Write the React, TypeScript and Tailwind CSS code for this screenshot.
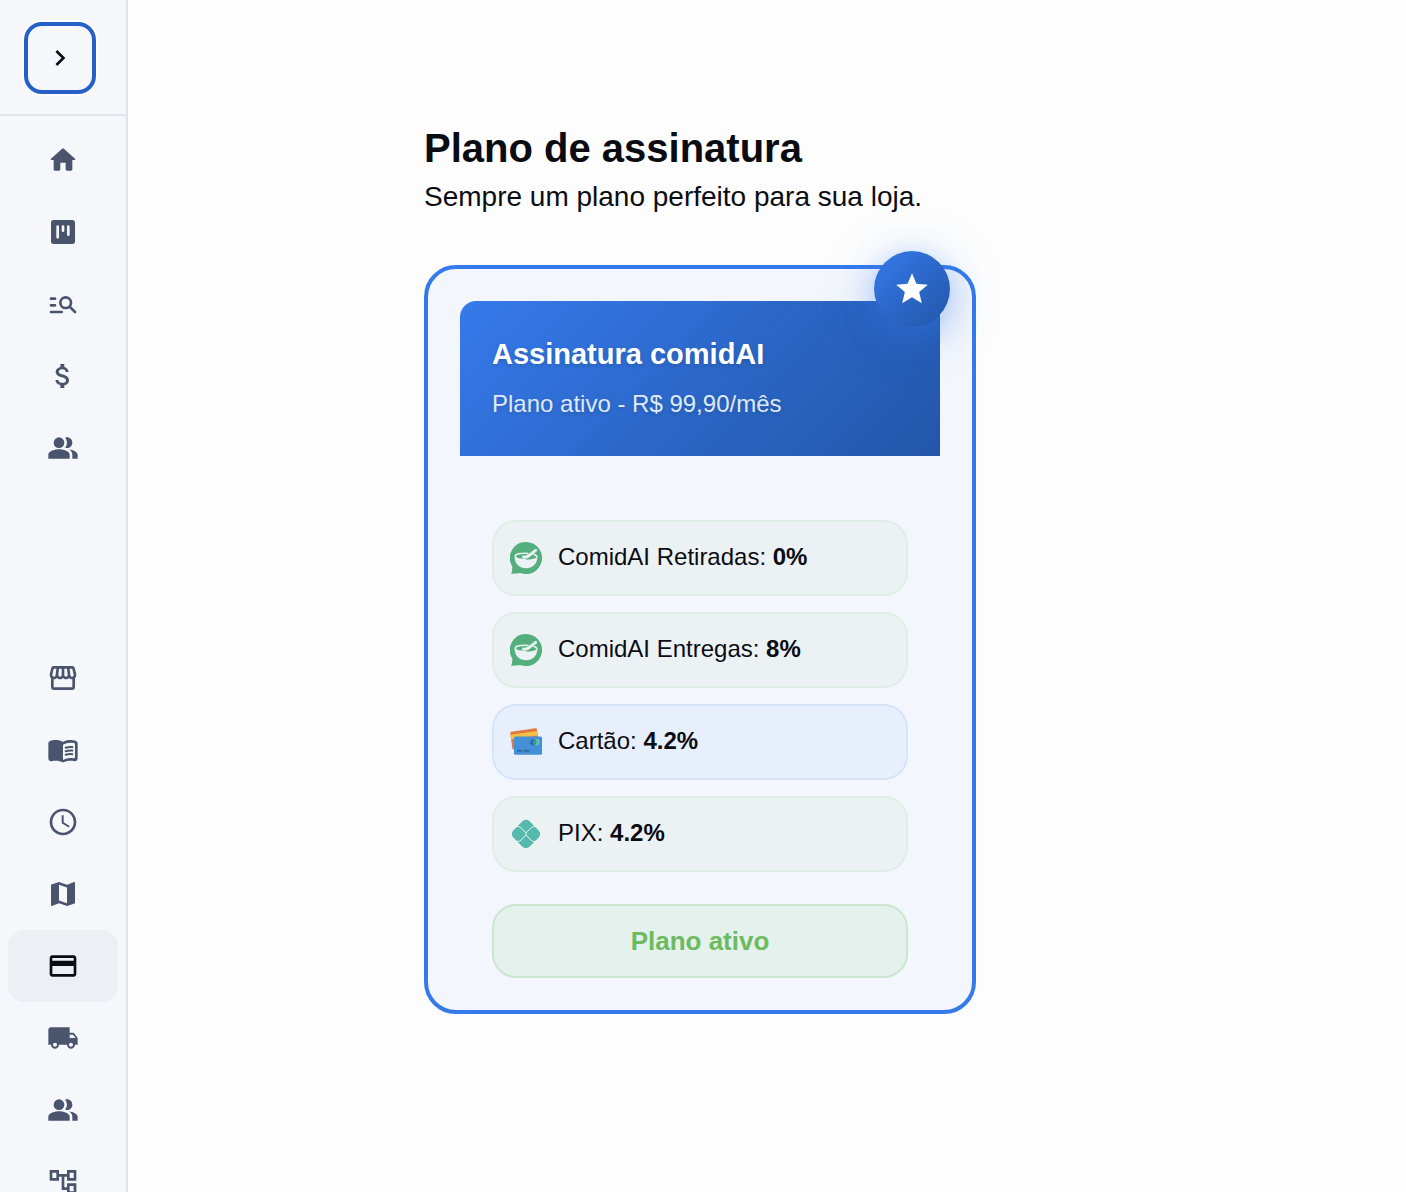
import type React from "react";

import {
  MdAccessTime,
  MdAttachMoney,
  MdChevronRight,
  MdCreditCard,
  MdLocalShipping,
  MdMap,
  MdOutlineAccountTree,
  MdPeopleAlt,
  MdStar,
  MdStorefront,
} from "react-icons/md";

type IconType = React.ComponentType<{ className?: string }>;

interface NavEntry {
  label: string;
  icon: IconType;
  active?: boolean;
}

interface Fee {
  label: string;
  value: string;
  icon: IconType;
  tone: "green" | "blue";
}

function HomeIcon({ className }: { className?: string }) {
  return (
    <svg viewBox="0 0 24 24" fill="currentColor" className={className}>
      <path d="M10 19v-5h4v5c0 .55.45 1 1 1h3c.55 0 1-.45 1-1v-7h1.7c.46 0 .68-.57.33-.87L12.67 3.6c-.38-.34-.96-.34-1.34 0l-8.36 7.53c-.34.3-.13.87.33.87H5v7c0 .55.45 1 1 1h3c.55 0 1-.45 1-1z" />
    </svg>
  );
}

function KanbanIcon({ className }: { className?: string }) {
  return (
    <svg viewBox="0 0 24 24" className={className}>
      <rect x="3" y="3" width="18" height="18" rx="2" fill="currentColor" />
      <path d="M8 8v8M12 8v3M16 8v6" stroke="#f5f7fb" strokeWidth="2" strokeLinecap="round" />
    </svg>
  );
}

function ManageSearchIcon({ className }: { className?: string }) {
  return (
    <svg viewBox="0 0 24 24" fill="none" stroke="currentColor" strokeWidth="2" strokeLinecap="round" className={className}>
      <path d="M3 8h3M3 13h3M3 18h8" />
      <circle cx="14" cy="11" r="4" />
      <path d="M17 14l4 4" />
    </svg>
  );
}

function MenuBookIcon({ className }: { className?: string }) {
  return (
    <svg viewBox="0 0 24 24" fill="currentColor" className={className}>
      <path
        fillRule="evenodd"
        d="M17.5 4.5c-1.95 0-4.05.4-5.5 1.5-1.45-1.1-3.55-1.5-5.5-1.5-1.45 0-2.99.22-4.28.79C1.49 5.62 1 6.33 1 7.14v11.28c0 1.3 1.22 2.26 2.48 1.94.98-.25 2.02-.36 3.02-.36 1.56 0 3.22.26 4.56.92.6.3 1.28.3 1.87 0 1.34-.67 3-.92 4.56-.92 1 0 2.04.11 3.02.36 1.26.33 2.48-.63 2.48-1.94V7.14c0-.81-.49-1.52-1.22-1.85-1.28-.57-2.82-.79-4.27-.79zM21 17.23c0 .63-.58 1.09-1.2.98-.75-.14-1.53-.2-2.3-.2-1.7 0-4.15.65-5.5 1.5V8c1.35-.85 3.8-1.5 5.5-1.5.92 0 1.83.09 2.7.28.46.1.8.51.8.98v9.47z"
      />
      <path
        d="M14 10.3q2.4-.8 5-.5M14 12.9q2.4-.8 5-.5M14 15.6q2.4-.8 5-.5"
        fill="none"
        stroke="currentColor"
        strokeWidth="1.5"
        strokeLinecap="round"
      />
    </svg>
  );
}

function BowlIcon({ className }: { className?: string }) {
  return (
    <svg viewBox="0 0 32 32" className={className}>
      <path d="M16 0a16 16 0 1 1-5.5 31Q6.500 31.500 1.200 31.700Q2.500 28.500 2.300 24.500A16 16 0 0 1 16 0z" fill="#55ae7d" />
      <path d="M4.500 15C5 22 9.500 26.300 16 26.300S27 22 27.500 15Q23 17.600 16 17.600T4.500 15z" fill="#ecf2f4" />
      <path
        d="M18.500 11.500C11 10.700 5.200 12 5.200 14.200S10.200 17.500 16 17.500M23.500 12.200q3.800 1 3.300 3.200"
        fill="none"
        stroke="#ecf2f4"
        strokeWidth="1.6"
      />
      <path
        d="M25.700 8.300L19 13.600Q17 15.400 13.500 15"
        fill="none"
        stroke="#ecf2f4"
        strokeWidth="2.8"
        strokeLinecap="round"
        strokeLinejoin="round"
      />
    </svg>
  );
}

function CardsIcon({ className }: { className?: string }) {
  return (
    <svg viewBox="0 0 32 32" className={className}>
      <g transform="rotate(-8 14 12)">
        <rect x="1" y="4" width="27" height="18" rx="1.5" fill="#e2793f" />
        <rect x="1" y="7" width="27" height="4.5" fill="#f2c04a" />
      </g>
      <rect x="4" y="10.5" width="28" height="18.2" rx="1.5" fill="#4390d6" />
      <circle cx="23.3" cy="16.2" r="3.2" fill="#2d6ca8" />
      <circle cx="26.6" cy="16.2" r="3.2" fill="#5cc0ac" />
      <ellipse cx="24.9" cy="16.2" rx="1.5" ry="2.7" fill="#3b8f9f" />
      <path d="M7 24.700h5.500M14 24.700h5.500" stroke="#2d6ca8" strokeWidth="2" />
    </svg>
  );
}

function PixIcon({ className }: { className?: string }) {
  return (
    <svg viewBox="0 0 32 32" className={className}>
      <rect x="4.5" y="4.5" width="23" height="23" rx="5" transform="rotate(45 16 16)" fill="#55b9ad" />
      <path
        d="M5 8.600H8Q9.800 8.600 11.200 10L16 14.900L20.800 10Q22.200 8.600 24 8.600H27M5 23.400H8Q9.800 23.400 11.200 22L16 17.100L20.800 22Q22.200 23.400 24 23.400H27M16 14.900v2.200"
        fill="none"
        stroke="#ecf2f4"
        strokeWidth="1"
      />
    </svg>
  );
}

const mainNav: NavEntry[] = [
  { label: "Início", icon: HomeIcon },
  { label: "Pedidos", icon: KanbanIcon },
  { label: "Histórico", icon: ManageSearchIcon },
  { label: "Financeiro", icon: MdAttachMoney },
  { label: "Clientes", icon: MdPeopleAlt },
];

const storeNav: NavEntry[] = [
  { label: "Loja", icon: MdStorefront },
  { label: "Cardápio", icon: MenuBookIcon },
  { label: "Horários", icon: MdAccessTime },
  { label: "Mapa", icon: MdMap },
  { label: "Assinatura", icon: MdCreditCard, active: true },
  { label: "Entregas", icon: MdLocalShipping },
  { label: "Equipe", icon: MdPeopleAlt },
  { label: "Integrações", icon: MdOutlineAccountTree },
];

const fees: Fee[] = [
  { label: "ComidAI Retiradas:", value: "0%", icon: BowlIcon, tone: "green" },
  { label: "ComidAI Entregas:", value: "8%", icon: BowlIcon, tone: "green" },
  { label: "Cartão:", value: "4.2%", icon: CardsIcon, tone: "blue" },
  { label: "PIX:", value: "4.2%", icon: PixIcon, tone: "green" },
];

const toneStyles = {
  green: "border-[#dfeee5] bg-[#ecf2f4]",
  blue: "border-[#d6e4fa] bg-[#e8effc]",
};

function NavList({ entries }: { entries: NavEntry[] }) {
  return (
    <ul>
      {entries.map(({ label, icon: Icon, active }) => (
        <li key={label}>
          <a
            href="#"
            aria-label={label}
            className={`flex h-18 items-center justify-center rounded-2xl ${
              active ? "bg-[#eceff4] text-[#0b0c12]" : "text-[#4a546c]"
            }`}
          >
            <Icon className="size-8" />
          </a>
        </li>
      ))}
    </ul>
  );
}

function Sidebar() {
  return (
    <aside className="h-screen w-32 shrink-0 overflow-hidden border-r-2 border-[#e1e4ed] bg-[#f5f7fb]">
      <div className="border-b-2 border-[#e1e4ed] px-6 pt-[22px] pb-5">
        <button
          type="button"
          aria-label="Expandir menu"
          className="flex size-18 items-center justify-center rounded-[18px] border-4 border-[#2560c8] text-[#0b0c12] ring-2 ring-white"
        >
          <MdChevronRight className="size-8" />
        </button>
      </div>
      <nav className="flex flex-col gap-[158px] p-2">
        <NavList entries={mainNav} />
        <NavList entries={storeNav} />
      </nav>
    </aside>
  );
}

function PlanCard() {
  return (
    <section className="relative w-[552px] rounded-[32px] border-4 border-[#357aeb] bg-[#f3f6fc] p-8">
      <div className="rounded-t-2xl bg-linear-135 from-[#357aeb] to-[#2356a9] p-8 text-white">
        <h2 className="text-[29px] leading-[43px] font-bold text-shadow-[0_2px_4px_rgb(0_0_0/0.15)]">
          Assinatura comidAI
        </h2>
        <p className="mt-2 text-2xl leading-10 text-[#dfe9fa] text-shadow-[0_2px_4px_rgb(0_0_0/0.15)]">
          Plano ativo - R$ 99,90/mês
        </p>
      </div>
      <div className="absolute -top-[18px] right-[22px] flex size-[76px] items-center justify-center rounded-full bg-linear-135 from-[#357aeb] to-[#2356a9] text-white shadow-[0_8px_32px_rgb(53_122_235/0.4),0_8px_64px_rgb(53_122_235/0.15)]">
        <MdStar className="size-[38px]" />
      </div>
      <div className="px-8 pt-16">
        <ul className="flex flex-col gap-4">
          {fees.map(({ label, value, icon: Icon, tone }) => (
            <li
              key={label}
              className={`flex h-[76px] items-center gap-4 rounded-3xl border-2 px-4 text-2xl ${toneStyles[tone]}`}
            >
              <Icon className="size-8 shrink-0" />
              <p className="pb-0.5">
                {label} <strong>{value}</strong>
              </p>
            </li>
          ))}
        </ul>
        <button
          type="button"
          className="mt-8 h-[74px] w-full rounded-3xl border-2 border-[#cbe5d0] bg-[#e5f1ed] text-[26px] font-bold text-[#6dba60]"
        >
          Plano ativo
        </button>
      </div>
    </section>
  );
}

export default function App() {
  return (
    <div className="flex min-h-screen bg-[#fdfdfd] font-['Liberation_Sans',Arial,sans-serif] text-[#0b0c12]">
      <Sidebar />
      <main className="flex-1 pt-[124px]">
        <div className="mx-auto max-w-[686px]">
          <h1 className="text-[40px] leading-12 font-bold">Plano de assinatura</h1>
          <p className="mt-[5px] mb-12 text-[28px] leading-10">Sempre um plano perfeito para sua loja.</p>
          <PlanCard />
        </div>
      </main>
    </div>
  );
}
